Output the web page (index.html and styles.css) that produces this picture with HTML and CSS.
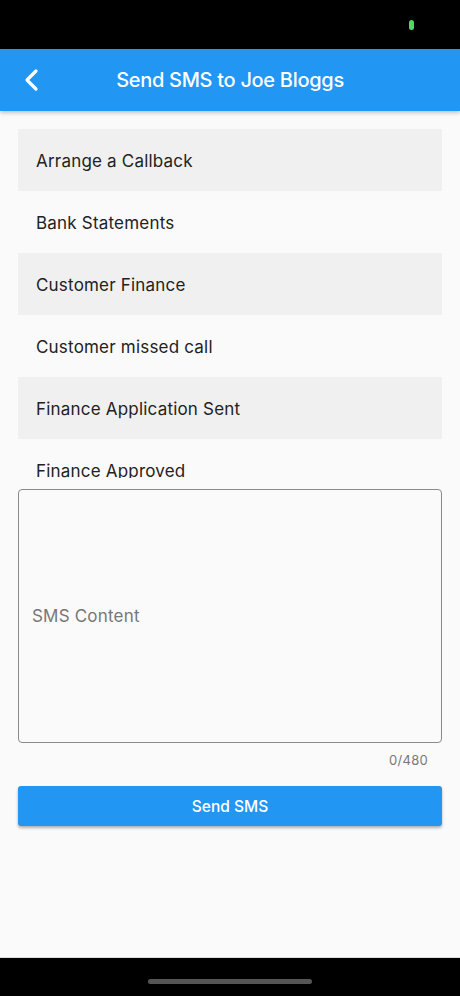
FILE: index.html
```html
<!DOCTYPE html>
<html>
<head>
<meta charset="utf-8">
<link rel="stylesheet" href="styles.css">
</head>
<body>
<div class="screen">
  <div class="statusbar"><span class="dot"></span></div>
  <header class="appbar">
    <svg class="back" width="20" height="24" viewBox="0 0 20 24"><path d="M14 3 L5 12 L14 21" fill="none" stroke="#fff" stroke-width="3.2" stroke-linecap="round" stroke-linejoin="round"/></svg>
    <h1 class="title">Send SMS to Joe Bloggs</h1>
  </header>
  <main class="content">
    <ul class="list">
      <li class="item alt">Arrange a Callback</li>
      <li class="item">Bank Statements</li>
      <li class="item alt">Customer Finance</li>
      <li class="item">Customer missed call</li>
      <li class="item alt">Finance Application Sent</li>
      <li class="item">Finance Approved</li>
    </ul>
    <div class="field"><span class="placeholder">SMS Content</span></div>
    <div class="counter">0/480</div>
    <button class="send">Send SMS</button>
  </main>
  <div class="navbar"><span class="pill"></span></div>
</div>
</body>
</html>
```
FILE: styles.css
```css
html, body { margin: 0; padding: 0; }
body { font-family: Inter, Roboto, "Noto Sans", sans-serif; background: #fafafa; }
.screen { width: 460px; height: 996px; display: flex; flex-direction: column; background: #fafafa; overflow: hidden; }
.statusbar { height: 49px; background: #000; position: relative; flex: none; }
.dot { position: absolute; left: 409px; top: 20px; width: 5px; height: 10px; border-radius: 3px; background: #4cd964; }
.appbar { height: 62px; flex: none; background: #2196f3; display: flex; align-items: center; position: relative; box-shadow: 0 2px 4px rgba(0,0,0,0.22); z-index: 1; }
.back { position: absolute; left: 22px; top: 19px; }
.title { margin: 0; width: 100%; text-align: center; color: #fff; font-size: 20px; font-weight: 500; letter-spacing: -0.3px; }
.content { flex: 1; padding: 18px 18px 0; display: flex; flex-direction: column; }
.list { list-style: none; margin: 0; padding: 0; height: 349px; overflow: hidden; flex: none; }
.item { height: 62px; box-sizing: border-box; padding-top: 2px; display: flex; align-items: center; padding-left: 18px; font-size: 17px; color: #222; letter-spacing: 0.2px; }
.item.alt { background: #f0f0f0; }
.field { margin-top: 11px; height: 252px; border: 1px solid #8a8a8a; border-radius: 4px; display: flex; align-items: center; padding-left: 13px; flex: none; }
.placeholder { font-size: 17px; color: #777; letter-spacing: 0.2px; }
.counter { text-align: right; font-size: 13px; color: #777; padding-right: 14px; margin-top: 9px; height: 16px; letter-spacing: 0.3px; }
.send { margin-top: 18px; height: 40px; border: none; border-radius: 3px; background: #2196f3; color: #fff; font-family: Inter, Roboto, sans-serif; font-size: 15.5px; font-weight: 500; box-shadow: 0 2px 3px rgba(0,0,0,0.3); flex: none; }
.navbar { height: 38px; background: #000; flex: none; display: flex; justify-content: center; align-items: center; border-top: 1px solid #ddd; }
.pill { width: 164px; height: 5px; border-radius: 3px; background: #555; margin-top: 8px; }
```
